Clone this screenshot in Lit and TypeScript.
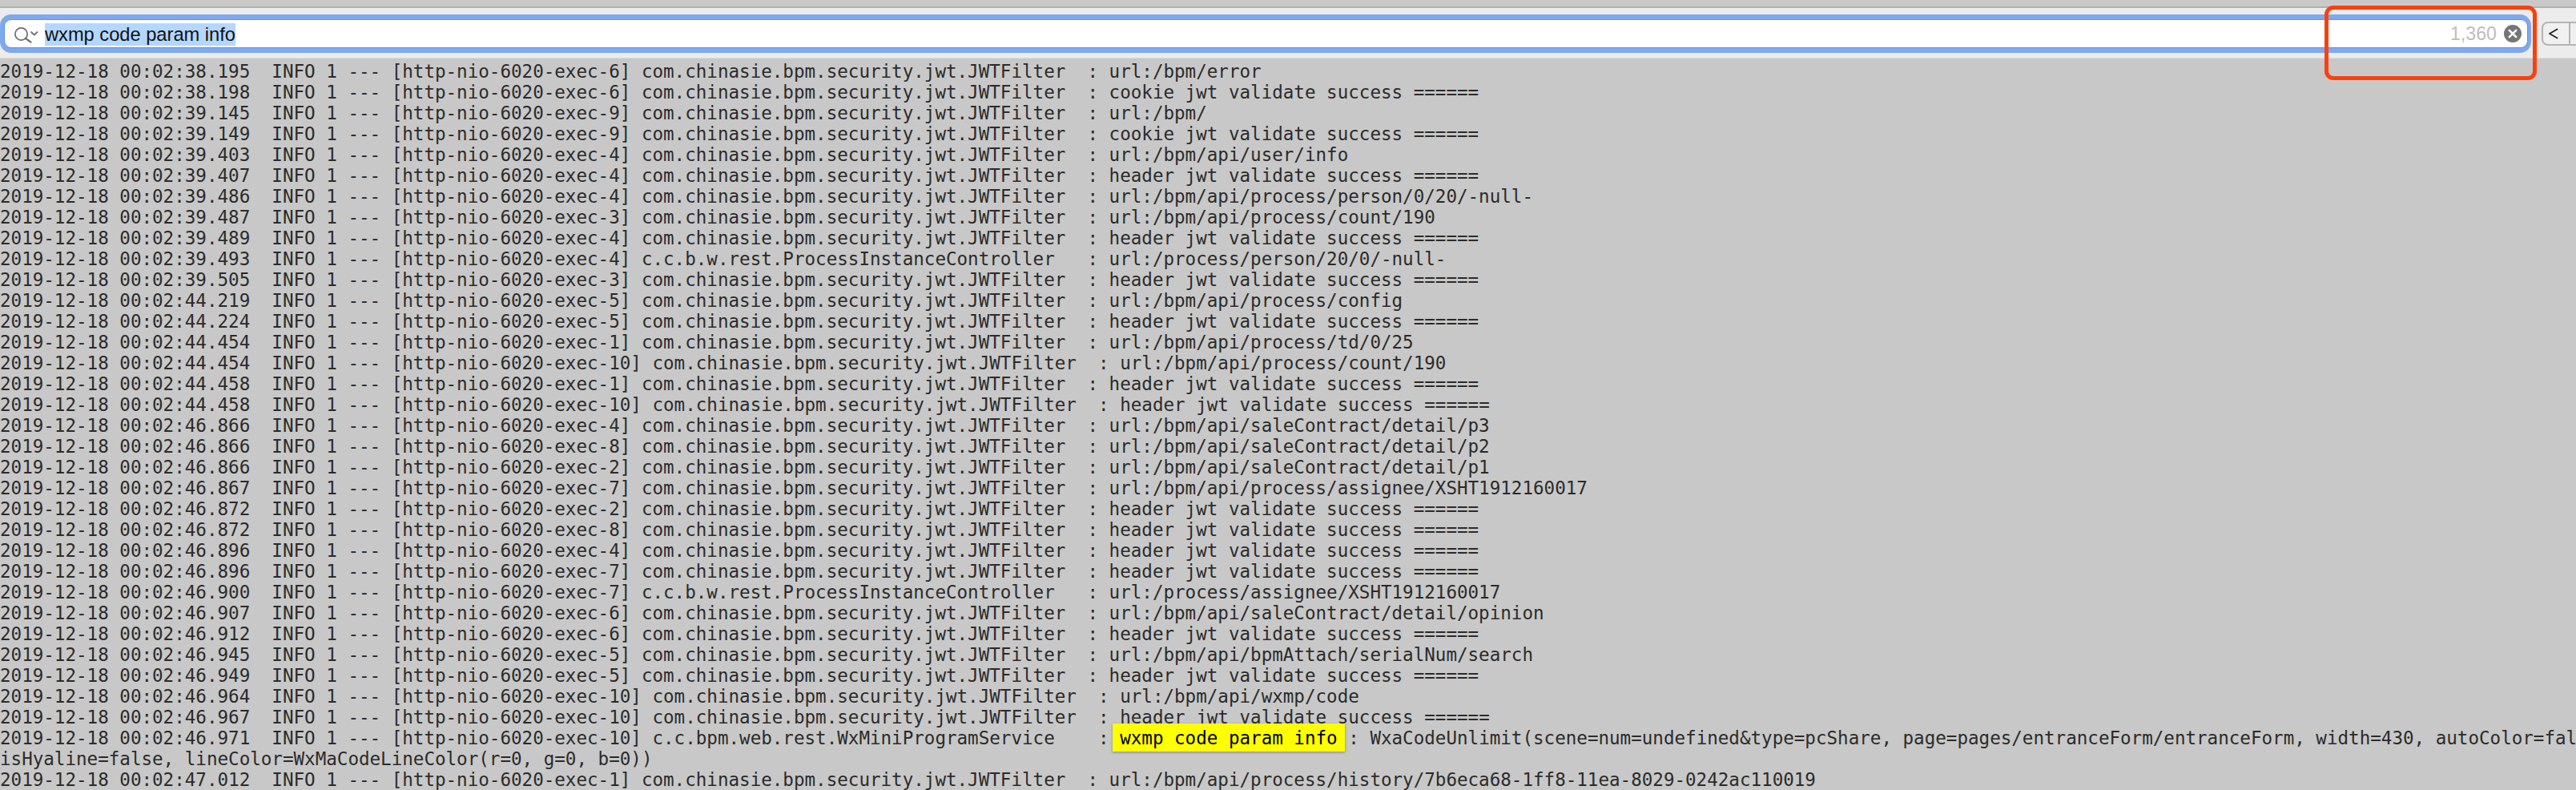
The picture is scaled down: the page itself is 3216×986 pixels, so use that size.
import { LitElement, html, css } from "lit";
import { customElement } from "lit/decorators.js";

const JWT = "com.chinasie.bpm.security.jwt.JWTFilter  ";
const CTRL = "c.c.b.w.rest.ProcessInstanceController   ";
const SVC = "c.c.bpm.web.rest.WxMiniProgramService    ";
const COOKIE = "cookie jwt validate success ======";
const HEADER = "header jwt validate success ======";

type Row = [string, string, string, string];
const rows: Row[] = [
  ["38.195", "6", JWT, "url:/bpm/error"],
  ["38.198", "6", JWT, COOKIE],
  ["39.145", "9", JWT, "url:/bpm/"],
  ["39.149", "9", JWT, COOKIE],
  ["39.403", "4", JWT, "url:/bpm/api/user/info"],
  ["39.407", "4", JWT, HEADER],
  ["39.486", "4", JWT, "url:/bpm/api/process/person/0/20/-null-"],
  ["39.487", "3", JWT, "url:/bpm/api/process/count/190"],
  ["39.489", "4", JWT, HEADER],
  ["39.493", "4", CTRL, "url:/process/person/20/0/-null-"],
  ["39.505", "3", JWT, HEADER],
  ["44.219", "5", JWT, "url:/bpm/api/process/config"],
  ["44.224", "5", JWT, HEADER],
  ["44.454", "1", JWT, "url:/bpm/api/process/td/0/25"],
  ["44.454", "10", JWT, "url:/bpm/api/process/count/190"],
  ["44.458", "1", JWT, HEADER],
  ["44.458", "10", JWT, HEADER],
  ["46.866", "4", JWT, "url:/bpm/api/saleContract/detail/p3"],
  ["46.866", "8", JWT, "url:/bpm/api/saleContract/detail/p2"],
  ["46.866", "2", JWT, "url:/bpm/api/saleContract/detail/p1"],
  ["46.867", "7", JWT, "url:/bpm/api/process/assignee/XSHT1912160017"],
  ["46.872", "2", JWT, HEADER],
  ["46.872", "8", JWT, HEADER],
  ["46.896", "4", JWT, HEADER],
  ["46.896", "7", JWT, HEADER],
  ["46.900", "7", CTRL, "url:/process/assignee/XSHT1912160017"],
  ["46.907", "6", JWT, "url:/bpm/api/saleContract/detail/opinion"],
  ["46.912", "6", JWT, HEADER],
  ["46.945", "5", JWT, "url:/bpm/api/bpmAttach/serialNum/search"],
  ["46.949", "5", JWT, HEADER],
  ["46.964", "10", JWT, "url:/bpm/api/wxmp/code"],
  ["46.967", "10", JWT, HEADER],
];

function prefix(time: string, exec: string, logger: string): string {
  return `2019-12-18 00:02:${time}  INFO 1 --- [http-nio-6020-exec-${exec}] ${logger}: `;
}

@customElement("app-root")
export class AppRoot extends LitElement {
  static styles = css`
    :host {
      display: block;
      position: relative;
      width: 3216px;
      height: 986px;
      overflow: hidden;
      background: #c8c8c8;
    }
    .titlebar {
      height: 8px;
      background: #c9c9c9;
      border-bottom: 2px solid #b0b0b0;
    }
    .toolbar {
      height: 63px;
      box-sizing: border-box;
      padding-top: 2px;
      display: flex;
      align-items: center;
      gap: 13px;
      background: #ececec;
      border-bottom: 1px solid #dcdcdc;
      overflow: hidden;
    }
    .field {
      flex: none;
      width: 3160px;
      height: 48px;
      box-sizing: border-box;
      padding: 7px 5px 7px 6px;
      background: #7fa9ef;
      border-radius: 14px;
    }
    .input {
      height: 100%;
      box-sizing: border-box;
      display: flex;
      align-items: center;
      background: #fff;
      border-radius: 8px;
      box-shadow: 0 0 0 1px #6492e3;
      padding: 0 7px 0 12px;
    }
    .glass {
      flex: none;
      width: 32px;
      height: 24px;
      margin-right: 6px;
    }
    .query {
      margin-top: 2px;
      font-family: "Liberation Sans", Arial, sans-serif;
      font-size: 23.66px;
      line-height: 28px;
      background: #b3d7ff;
      color: #111;
      white-space: pre;
    }
    .count {
      margin-left: auto;
      margin-right: 9px;
      font-family: "Liberation Sans", Arial, sans-serif;
      font-size: 23.2px;
      color: #bdbdbd;
    }
    .clear {
      flex: none;
      width: 22px;
      height: 22px;
      display: block;
    }
    .seg {
      flex: none;
      display: flex;
      height: 30px;
      box-sizing: border-box;
      border: 2px solid #b4b4b4;
      border-radius: 8px;
      background: #f0f0f0;
    }
    .seg span {
      width: 32px;
      box-sizing: border-box;
      padding-left: 7px;
      display: flex;
      align-items: center;
    }
    .seg span + span {
      border-left: 2px solid #b4b4b4;
    }
    .seg svg {
      width: 12px;
      height: 16px;
    }
    .log {
      padding-top: 3px;
      font-family: "DejaVu Sans Mono", "Liberation Mono", monospace;
      font-size: 22.56px;
      line-height: 26px;
      color: #2b2b2b;
    }
    .row {
      height: 26px;
      white-space: pre;
    }
    .hit {
      display: inline-block;
      position: relative;
      padding: 5px 9px 4px;
      margin: -5px -9px -4px;
      background: #ffff00;
      color: #000;
      box-shadow: 0 1px 3px rgba(0, 0, 0, 0.35);
    }
    .mark {
      position: absolute;
      left: 2902px;
      top: 7px;
      width: 265px;
      height: 93px;
      box-sizing: border-box;
      border: 5px solid #f8410f;
      border-radius: 11px;
    }
  `;

  render() {
    return html`
      <div class="titlebar"></div>
      <div class="toolbar">
        <div class="field">
          <div class="input">
            <svg class="glass" viewBox="0 0 32 24" fill="none" stroke="#6e6e6e" stroke-linecap="round" stroke-linejoin="round">
              <circle cx="8.5" cy="12.5" r="7.6" stroke-width="1.7"></circle>
              <path d="M14 18 L20.5 22.7" stroke-width="2.2"></path>
              <path d="M21 10 L24.8 13.5 L28.6 10" stroke-width="1.7"></path>
            </svg>
            <span class="query">wxmp code param info</span>
            <span class="count">1,360</span>
            <svg class="clear" viewBox="0 0 22 22">
              <circle cx="11" cy="11" r="11" fill="#767676"></circle>
              <path d="M6.8 6.8 L15.2 15.2 M15.2 6.8 L6.8 15.2" stroke="#fff" stroke-width="2.6" stroke-linecap="round"></path>
            </svg>
          </div>
        </div>
        <div class="seg">
          <span><svg viewBox="0 0 12 16" fill="none" stroke="#222" stroke-width="1.8" stroke-linecap="round" stroke-linejoin="round"><path d="M10.5 2.5 L1 8 L10.5 13.5"></path></svg></span>
          <span></span>
        </div>
      </div>
      <div class="log">
        ${rows.map(([t, e, l, m]) => html`<div class="row">${prefix(t, e, l)}${m}</div>`)}
        <div class="row">${prefix("46.971", "10", SVC)}<span class="hit">wxmp code param info</span> : WxaCodeUnlimit(scene=num=undefined&type=pcShare, page=pages/entranceForm/entranceForm, width=430, autoColor=fal</div>
        <div class="row">isHyaline=false, lineColor=WxMaCodeLineColor(r=0, g=0, b=0))</div>
        <div class="row">${prefix("47.012", "1", JWT)}url:/bpm/api/process/history/7b6eca68-1ff8-11ea-8029-0242ac110019</div>
      </div>
      <div class="mark"></div>
    `;
  }
}
